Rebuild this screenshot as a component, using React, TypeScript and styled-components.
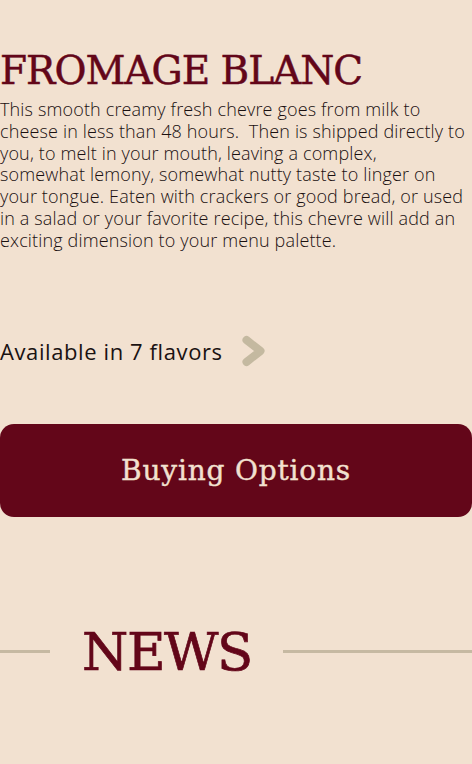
import React from "react";
import styled, { createGlobalStyle } from "styled-components";

const Global = createGlobalStyle`
  html, body { margin: 0; padding: 0; background: #f2e1d0; }
  body { font-family: "Open Sans", sans-serif; }
`;

const Page = styled.main`
  display: flex;
  flex-direction: column;
  align-items: stretch;
  padding-top: 49px;
`;

const Title = styled.h1`
  margin: 0;
  font-family: "DejaVu Serif", serif;
  font-weight: 400;
  font-size: 39px;
  line-height: 44px;
  letter-spacing: -1px;
  color: #630619;
  -webkit-text-stroke: 0.5px #630619;
`;

const Description = styled.p`
  margin: 6px 7px 0 0;
  font-family: "Open Sans", sans-serif;
  font-weight: 300;
  font-size: 18px;
  line-height: 21.8px;
  letter-spacing: 0.15px;
  color: #1a1010;
`;

const FlavorsRow = styled.a`
  display: flex;
  align-items: center;
  gap: 18px;
  margin-top: 83px;
  font-family: "Open Sans", sans-serif;
  font-weight: 400;
  font-size: 22px;
  line-height: 32px;
  letter-spacing: 0.6px;
  color: #1a1212;
  text-decoration: none;
`;

const Chevron = styled.svg`
  flex: none;
  display: block;
`;

const BuyButton = styled.button`
  margin: 57px 0 0;
  height: 93px;
  width: 100%;
  border: none;
  border-radius: 14px;
  background: #630619;
  color: #f2e1d0;
  font-family: "DejaVu Serif", serif;
  font-size: 28px;
  letter-spacing: 0.8px;
  -webkit-text-stroke: 0.4px #f2e1d0;
  cursor: pointer;
`;

const NewsHeader = styled.div`
  display: flex;
  align-items: center;
  margin-top: 105px;
`;

const Rule = styled.div<{ $w?: number }>`
  height: 3px;
  background: #c6b9a2;
  ${(p) => (p.$w ? `width: ${p.$w}px; flex: none;` : "flex: 1;")}
`;

const NewsTitle = styled.h2`
  margin: 0 31px 0 32px;
  font-family: "DejaVu Serif", serif;
  font-weight: 400;
  font-size: 53px;
  line-height: 60px;
  letter-spacing: -1.5px;
  color: #630619;
  -webkit-text-stroke: 0.7px #630619;
`;

export default function App() {
  return (
    <>
      <Global />
      <Page>
        <Title>FROMAGE BLANC</Title>
        <Description>
          This smooth creamy fresh chevre goes from milk to cheese in less than 48 hours.&nbsp; Then is shipped
          directly to you, to melt in your mouth, leaving a complex, somewhat lemony, somewhat nutty taste to linger
          on your tongue. Eaten with crackers or good bread, or used in a salad or your favorite recipe, this chevre
          will add an exciting dimension to your menu palette.
        </Description>
        <FlavorsRow href="#">
          Available in 7 flavors
          <Chevron width="26" height="32" viewBox="0 0 26 32">
            <path d="M5.5 5 L19.5 16 L5.5 27" fill="none" stroke="#c4b9a0" strokeWidth="8" strokeLinejoin="round" strokeLinecap="round" />
          </Chevron>
        </FlavorsRow>
        <BuyButton>Buying Options</BuyButton>
        <NewsHeader>
          <Rule $w={50} />
          <NewsTitle>NEWS</NewsTitle>
          <Rule />
        </NewsHeader>
      </Page>
    </>
  );
}
